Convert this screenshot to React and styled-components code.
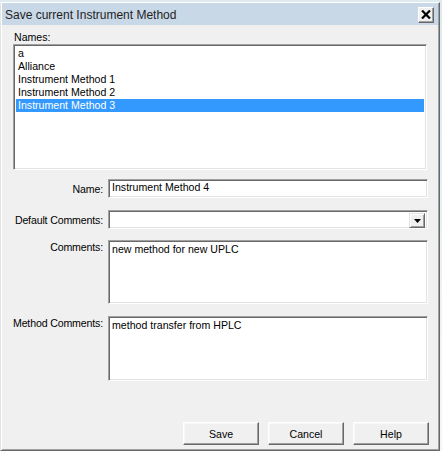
import React from "react";
import styled, { createGlobalStyle } from "styled-components";

const Global = createGlobalStyle`
  html, body { margin: 0; padding: 0; background: #e4ecf2; }
  * { box-sizing: border-box; }
`;

const Desktop = styled.div`
  width: 442px;
  height: 451px;
  padding-top: 2px;
  background: linear-gradient(#dfe9f0, #f4f7f9);
  overflow: hidden;
`;

const Window = styled.div`
  width: 440px;
  height: 449px;
  display: flex;
  flex-direction: column;
  background: #f0f0f0;
  border-top: 1px solid #ffffff;
  border-left: 1px solid #e3e3e3;
  border-right: 1px solid #696969;
  border-bottom: 1px solid #696969;
  box-shadow: inset 1px 0 #ffffff, inset -1px -1px #a0a0a0;
`;

const TitleBar = styled.div`
  height: 22px;
  flex: none;
  margin-left: 1px;
  margin-right: 1px;
  display: flex;
  align-items: center;
  justify-content: space-between;
  background: #c9d8e6;
  padding-left: 3px;
  padding-right: 4px;
`;

const TitleText = styled.span`
  font-family: "Liberation Sans", Arial, sans-serif;
  font-size: 12px;
  color: #1f1f1f;
  padding-top: 1px;
`;

const CloseButton = styled.button`
  width: 16px;
  height: 16px;
  padding: 0;
  margin: 1px 0 0 0;
  display: flex;
  align-items: center;
  justify-content: center;
  background: #f0f0f0;
  border-top: 1px solid #ffffff;
  border-left: 1px solid #ffffff;
  border-right: 1px solid #696969;
  border-bottom: 1px solid #696969;
  box-shadow: inset -1px -1px #a0a0a0;
`;

const Body = styled.div`
  flex: 1;
  display: flex;
  flex-direction: column;
  padding: 0 9px 5px 12px;
  font-family: "Liberation Sans", Arial, sans-serif;
  font-size: 10.6px;
  color: #000;
`;

const TopLabel = styled.div`
  margin-top: 6px;
  height: 13px;
  line-height: 13px;
  padding-left: 1px;
`;

const sunken = `
  background: #ffffff;
  border-top: 1px solid #a0a0a0;
  border-left: 1px solid #a0a0a0;
  border-right: 1px solid #ffffff;
  border-bottom: 1px solid #ffffff;
  box-shadow: inset 1px 1px #696969, inset -1px -1px #e3e3e3;
`;

const ListBox = styled.div`
  ${sunken}
  width: 414px;
  height: 126px;
  padding: 2px;
  display: flex;
  flex-direction: column;
`;

const ListItem = styled.div`
  height: 13px;
  line-height: 13px;
  padding-left: 2px;
  white-space: nowrap;
  background: ${(p) => (p.$selected ? "#3399ff" : "transparent")};
  color: ${(p) => (p.$selected ? "#ffffff" : "#000000")};
`;

const FieldRow = styled.div`
  display: flex;
  align-items: ${(p) => (p.$top ? "flex-start" : "center")};
  gap: 5px;
  margin-top: ${(p) => p.$mt}px;
  margin-left: -10px;
`;

const Label = styled.div`
  width: 100px;
  text-align: right;
  line-height: 13px;
  padding-top: 1px;
  letter-spacing: -0.15px;
  white-space: nowrap;
`;

const TextInput = styled.div`
  ${sunken}
  width: 320px;
  height: ${(p) => p.$h}px;
  padding: ${(p) => (p.$multi ? "2px 3px" : "0 3px")};
  line-height: ${(p) => (p.$multi ? "13px" : `${p.$h - 4}px`)};
  white-space: nowrap;
`;

const Combo = styled.div`
  ${sunken}
  width: 320px;
  height: 19px;
  padding: 2px;
  display: flex;
  justify-content: flex-end;
`;

const DropButton = styled.div`
  width: 16px;
  height: 15px;
  display: flex;
  align-items: center;
  justify-content: center;
  background: #f0f0f0;
  border-top: 1px solid #e3e3e3;
  border-left: 1px solid #e3e3e3;
  border-right: 1px solid #696969;
  border-bottom: 1px solid #696969;
  box-shadow: inset 1px 1px #ffffff, inset -1px -1px #a0a0a0;
`;

const ButtonRow = styled.div`
  margin-top: auto;
  display: flex;
  justify-content: flex-end;
  gap: 9px;
  margin-right: 1px;
`;

const PushButton = styled.button`
  width: 76px;
  height: 23px;
  padding: 0;
  font-family: "Liberation Sans", Arial, sans-serif;
  font-size: 10.6px;
  color: #000;
  background: #f0f0f0;
  border-top: 1px solid #ffffff;
  border-left: 1px solid #ffffff;
  border-right: 1px solid #696969;
  border-bottom: 1px solid #696969;
  box-shadow: inset -1px -1px #a0a0a0, inset 1px 1px #f8f8f8;
`;

const names = ["a", "Alliance", "Instrument Method 1", "Instrument Method 2", "Instrument Method 3"];

export default function App() {
  return (
    <>
      <Global />
      <Desktop>
        <Window>
          <TitleBar>
            <TitleText>Save current Instrument Method</TitleText>
            <CloseButton aria-label="Close">
              <svg width="10" height="9" viewBox="0 0 10 9">
                <path d="M1 0.5 L9 8.5 M9 0.5 L1 8.5" stroke="#000" strokeWidth="2.2" />
              </svg>
            </CloseButton>
          </TitleBar>
          <Body>
            <TopLabel>Names:</TopLabel>
            <ListBox>
              {names.map((n, i) => (
                <ListItem key={n} $selected={i === names.length - 1}>
                  {n}
                </ListItem>
              ))}
            </ListBox>
            <FieldRow $mt={9}>
              <Label>Name:</Label>
              <TextInput $h={19}>Instrument Method 4</TextInput>
            </FieldRow>
            <FieldRow $mt={12}>
              <Label>Default Comments:</Label>
              <Combo>
                <DropButton>
                  <svg width="7" height="4" viewBox="0 0 7 4">
                    <path d="M0 0 H7 L3.5 4 Z" fill="#000" />
                  </svg>
                </DropButton>
              </Combo>
            </FieldRow>
            <FieldRow $mt={11} $top>
              <Label>Comments:</Label>
              <TextInput $h={64} $multi>new method for new UPLC</TextInput>
            </FieldRow>
            <FieldRow $mt={12} $top>
              <Label>Method Comments:</Label>
              <TextInput $h={65} $multi>method transfer from HPLC</TextInput>
            </FieldRow>
            <ButtonRow>
              <PushButton>Save</PushButton>
              <PushButton>Cancel</PushButton>
              <PushButton>Help</PushButton>
            </ButtonRow>
          </Body>
        </Window>
      </Desktop>
    </>
  );
}
